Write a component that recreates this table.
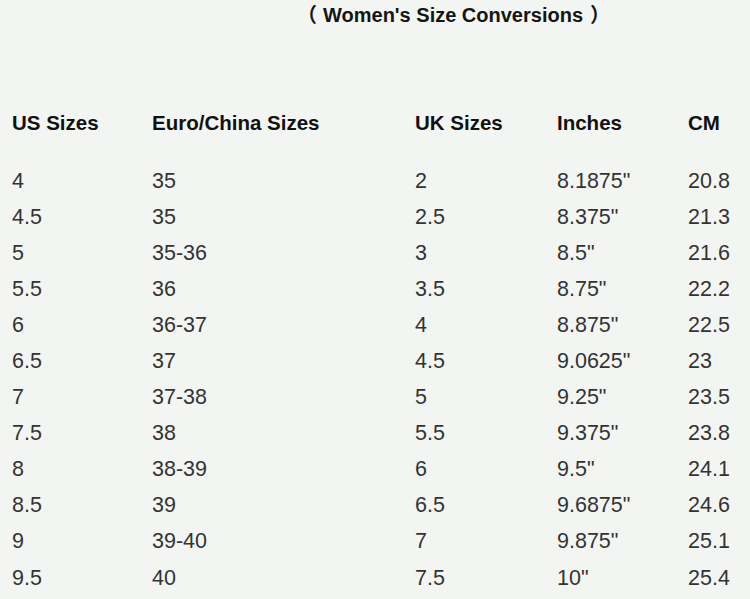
const headers = ['US Sizes', 'Euro/China Sizes', 'UK Sizes', 'Inches', 'CM']

const rows: string[][] = [
  ['4', '35', '2', '8.1875"', '20.8'],
  ['4.5', '35', '2.5', '8.375"', '21.3'],
  ['5', '35-36', '3', '8.5"', '21.6'],
  ['5.5', '36', '3.5', '8.75"', '22.2'],
  ['6', '36-37', '4', '8.875"', '22.5'],
  ['6.5', '37', '4.5', '9.0625"', '23'],
  ['7', '37-38', '5', '9.25"', '23.5'],
  ['7.5', '38', '5.5', '9.375"', '23.8'],
  ['8', '38-39', '6', '9.5"', '24.1'],
  ['8.5', '39', '6.5', '9.6875"', '24.6'],
  ['9', '39-40', '7', '9.875"', '25.1'],
  ['9.5', '40', '7.5', '10"', '25.4'],
]

const cols = 'grid grid-cols-[140px_263px_142px_131px_1fr]'

export default function App() {
  return (
    <div className="w-[750px] h-[599px] overflow-hidden bg-[#f3f5f2] font-['Liberation_Sans','Noto_Sans_CJK_SC',sans-serif]">
      {/* 제목 */}
      <div className="pt-[1px] pl-[297px] h-[29px] text-[20px] leading-[28px] font-bold text-[#151515] whitespace-nowrap">
        <span className="mr-[6px]">（</span>Women's Size Conversions<span className="ml-[7px]">）</span>
      </div>

      {/* 헤더 */}
      <div className={`${cols} mt-[79px] pl-[12px] h-[30px] text-[20.5px] leading-[30px] font-bold text-[#111]`}>
        {headers.map(h => (
          <div key={h} className="whitespace-nowrap">{h}</div>
        ))}
      </div>

      {/* 데이터 */}
      <div className="mt-[25px] pl-[12px] text-[21.5px] leading-[36.05px] text-[#333]">
        {rows.map((r, i) => (
          <div key={i} className={cols}>
            {r.map((c, j) => (
              <div key={j} className="whitespace-nowrap">{c}</div>
            ))}
          </div>
        ))}
      </div>
    </div>
  )
}
